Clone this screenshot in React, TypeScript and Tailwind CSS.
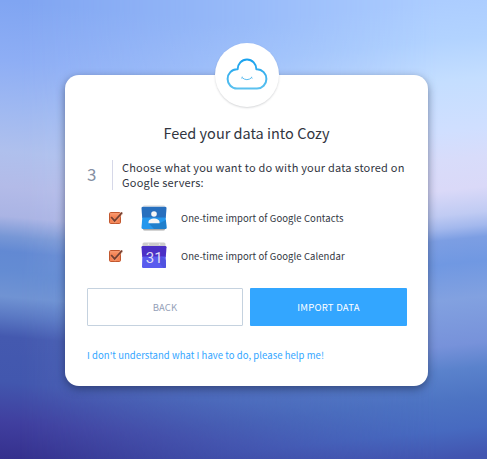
import type { ReactNode } from "react";

const CozyLogo = () => (
  <svg width="42" height="34" viewBox="0 0 42 34" fill="none" strokeLinecap="round" strokeLinejoin="round">
    <defs>
      <linearGradient id="cloud" x1="0" y1="0" x2="0" y2="34" gradientUnits="userSpaceOnUse">
        <stop stopColor="#16a0ee" />
        <stop offset="1" stopColor="#63c5ef" />
      </linearGradient>
    </defs>
    <path d="M11 30.5A9.4 9.6 0 0 1 11 11.3H11.6A9.4 9.8 0 0 1 30.4 11.3H31A9.4 9.6 0 0 1 31 30.5Z" stroke="url(#cloud)" strokeWidth="2" />
    <path d="M16 19.6q4.9 4.4 9.8 0M15.6 20l.8-.8M26.2 20l-.8-.8" stroke="#5abcf0" strokeWidth="1" />
  </svg>
);

const CheckedBox = () => (
  <svg width="16" height="14" viewBox="0 0 16 14" fill="none" className="shrink-0">
    <defs>
      <linearGradient id="box" x1="0" y1="1" x2="0" y2="13" gradientUnits="userSpaceOnUse">
        <stop stopColor="#f9a27a" />
        <stop offset=".5" stopColor="#f47b4a" />
        <stop offset="1" stopColor="#f58a5c" />
      </linearGradient>
    </defs>
    <rect x="1.5" y="1.5" width="11" height="11" rx="1.2" fill="url(#box)" stroke="#c2582f" />
    <path d="M3.5 6.5 7 10.3 14 2" stroke="#f8b08d" strokeWidth="3.2" opacity=".4" />
    <path d="M3.2 6 6.6 9.8 14.2 1.5" stroke="#744032" strokeWidth="1.8" />
  </svg>
);

const ContactsIcon = () => (
  <svg width="28" height="28" viewBox="0 0 28 28">
    <rect x="3" y="1" width="22" height="5" rx="1.5" fill="#e9e9e9" />
    <rect x="3" y="21" width="22" height="5.4" rx="1.5" fill="#aaa" />
    <path d="M1.5 4Q1.5 2.7 3 2.7H25Q26.5 2.7 26.5 4L25.8 14H2.2Z" fill="#276fbe" />
    <path d="M2.3 13.5H25.7L26.5 23.7Q26.5 25 25 25H3Q1.5 25 1.5 23.7Z" fill="#2497ed" />
    <path d="M8.5 19.2 14 25H25Q26.5 25 26.5 23.7L25.9 16 20 19Z" fill="#207fcc" />
    <circle cx="14" cy="10" r="2.8" fill="#f5f5f5" />
    <path d="M8.5 19.3V18C8.5 15.7 11.3 14.5 14 14.5S19.5 15.7 19.5 18V19.3Z" fill="#f5f5f5" />
  </svg>
);

const CalendarIcon = () => (
  <svg width="28" height="28" viewBox="0 0 28 28">
    <path d="M2.5 5V2Q2.5 .5 4 .5H24Q25.5 .5 25.5 2V5Z" fill="#ccc" />
    <circle cx="8.5" cy="2.2" r=".8" fill="#eee" />
    <circle cx="19.5" cy="2.2" r=".8" fill="#eee" />
    <path d="M1.5 5.2Q1.5 4 2.7 4H25.3Q26.5 4 26.5 5.2L25.8 15H2.2Z" fill="#4b30c6" />
    <path d="M2.3 14.5H25.7L26 24.8Q26 26 24.8 26H3.2Q2 26 2 24.8Z" fill="#595bee" />
    <path d="M19 20.5 23.5 26H24.8Q26 26 26 24.8L25.8 18 21 14.5Z" fill="#5052df" />
    <text x="14.2" y="20.9" textAnchor="middle" className="fill-[#dedcf5] font-[Roboto] text-[15px]">31</text>
  </svg>
);

const ImportOption = ({ icon, label }: { icon: ReactNode; label: string }) => (
  <li className="flex h-7 items-center">
    <CheckedBox />
    <span className="ml-4 shrink-0">{icon}</span>
    <span className="ml-[13px] text-[9.5px] leading-4 tracking-[0.09px] whitespace-nowrap text-[#32363f]">{label}</span>
  </li>
);

export default function App() {
  return (
    <div className="relative isolate h-[459px] w-[487px] overflow-hidden bg-[linear-gradient(185deg,#80a5f2_8.5%,#8eaef5_20.5%,#a0b9f1_30.5%,#afc0ed_38.5%,#b3bbe8_45.5%,#aab4e4_51.5%,#7797d6_55.5%,#6289d3_58.5%,#648cd3_62.5%,#7093d3_67.5%,#5a78c3_71.5%,#4459af_75.5%,#4257ae_84.5%,#403f9f_92.5%,#35308d_100%)] font-['Noto_Sans_CJK_SC',sans-serif]">
      <div className="absolute inset-0 -z-10 bg-[linear-gradient(174deg,#accdff_9.3%,#b2d3ff_17%,#c4deff_25%,#d0dfff_35%,#d8dcfa_40.6%,#dad9f8_46.5%,#c0cbf3_51.4%,#a3b8ed_54%,#7c9ee3_56.3%,#7098e2_61%,#82a1e0_68%,#7792da_77%,#5a82cc_81.8%,#4d74c3_87.7%,#476ac0_93.5%,#4255b0_99%)] [mask-image:linear-gradient(90deg,transparent_4%,black_90%)]" />
      <main className="mt-[75px] ml-[65px] flex h-[311px] w-[363px] flex-col rounded-[14px] bg-white px-[22px] shadow-[0_3px_9px_rgba(20,30,60,0.5)]">
        <div className="-mt-8 flex size-16 items-center justify-center self-center rounded-full bg-white shadow-[0_1px_2px_rgba(50,54,63,0.2)]">
          <CozyLogo />
        </div>
        <h1 className="mt-3.5 text-center text-[14.5px] leading-6 whitespace-nowrap text-[#32363f]">Feed your data into Cozy</h1>
        <div className="mt-[15px] flex h-[30px]">
          <span className="w-[25px] shrink-0 text-[17px] leading-[28px] text-[#858fa3]">3</span>
          <p className="border-l border-[#d6d8e8] pl-[9px] text-[11px] leading-[15px] tracking-[0.2px] whitespace-nowrap text-[#32363f]">
            Choose what you want to do with your data stored on<br />Google servers:
          </p>
        </div>
        <ul className="mt-3.5 ml-[21px] flex flex-col gap-2.5">
          <ImportOption icon={<ContactsIcon />} label="One-time import of Google Contacts" />
          <ImportOption icon={<CalendarIcon />} label="One-time import of Google Calendar" />
        </ul>
        <div className="mt-[18px] flex gap-[7px]">
          <button className="h-[38px] w-[156px] shrink-0 rounded-[1px] border border-[#c5d2df] text-[9.5px] tracking-[0.1px] text-[#95a1b8]">BACK</button>
          <button className="h-[38px] w-[157px] shrink-0 rounded-[1px] bg-[#33a6ff] text-[9.5px] tracking-[0.25px] text-white">IMPORT DATA</button>
        </div>
        <a className="mt-[21px] text-[9.5px] leading-4 tracking-[0.06px] whitespace-nowrap text-[#33a6ff]">I don't understand what I have to do, please help me!</a>
      </main>
    </div>
  );
}
